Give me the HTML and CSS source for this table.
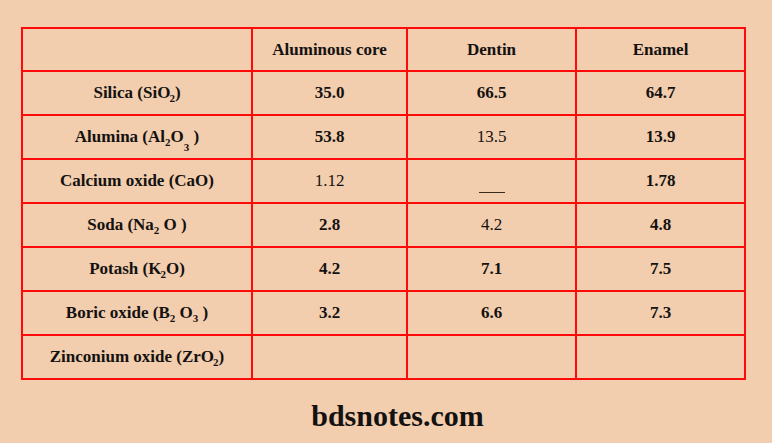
FILE: index.html
```html
<!DOCTYPE html>
<html lang="en">
<head>
<meta charset="utf-8">
<title>Composition</title>
<link rel="stylesheet" href="styles.css">
</head>
<body>
<div class="page">
  <table class="comp">
    <colgroup>
      <col class="c1"><col class="c2"><col class="c3"><col class="c4">
    </colgroup>
    <tr><td></td><td>Aluminous core</td><td>Dentin</td><td>Enamel</td></tr>
    <tr><td>Silica (SiO<sub class="tight">2</sub>)</td><td>35.0</td><td>66.5</td><td>64.7</td></tr>
    <tr><td>Alumina (Al<sub>2</sub>O<sub class="low">3</sub> )</td><td>53.8</td><td class="reg">13.5</td><td>13.9</td></tr>
    <tr><td>Calcium oxide (CaO)</td><td class="reg">1.12</td><td><span class="dash"></span></td><td>1.78</td></tr>
    <tr><td>Soda (Na<sub>2</sub> O )</td><td>2.8</td><td class="reg">4.2</td><td>4.8</td></tr>
    <tr><td>Potash (K<sub class="tight">2</sub>O)</td><td>4.2</td><td>7.1</td><td>7.5</td></tr>
    <tr><td>Boric oxide (B<sub>2</sub> O<sub>3</sub> )</td><td>3.2</td><td>6.6</td><td>7.3</td></tr>
    <tr><td>Zinconium oxide (ZrO<sub class="tight">2</sub>)</td><td></td><td></td><td></td></tr>
  </table>
  <div class="footer">bdsnotes.com</div>
</div>
</body>
</html>
```
FILE: styles.css
```css
html, body {
  margin: 0;
  padding: 0;
  background: #f2cdae;
}
body {
  font-family: "Liberation Serif", "DejaVu Serif", serif;
  color: #141210;
}
.page {
  width: 772px;
  height: 443px;
  padding: 27px 0 0 21px;
  box-sizing: border-box;
}
.comp {
  border-collapse: collapse;
  table-layout: fixed;
  width: 723px;
}
.c1 { width: 230px; }
.c2 { width: 155px; }
.c3 { width: 169px; }
.c4 { width: 169px; }
.comp td {
  border: 2px solid #ff0a0a;
  height: 42px;
  padding: 0;
  text-align: center;
  vertical-align: middle;
  font-size: 17px;
  font-weight: bold;
  line-height: 20px;
}
.comp tr:first-child td {
  height: 41px;
}
.comp td.reg {
  font-weight: normal;
}
sub {
  font-size: 11px;
  vertical-align: -4px;
  line-height: 0;
}
sub.tight {
  margin-left: -1px;
}
sub.low {
  vertical-align: -9px;
}
.dash {
  display: inline-block;
  width: 26px;
  height: 1px;
  background: #3a2a1a;
  vertical-align: -8px;
}
.footer {
  width: 723px;
  padding-left: 30px;
  box-sizing: border-box;
  text-align: center;
  font-size: 30px;
  font-weight: bold;
  margin-top: 19px;
  line-height: 34px;
}
```
